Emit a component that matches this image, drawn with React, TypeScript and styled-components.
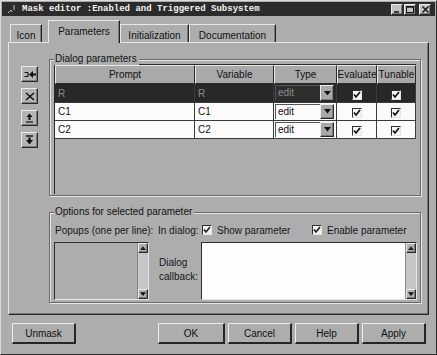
import React from "react";
import styled, { createGlobalStyle, css } from "styled-components";

const Global = createGlobalStyle`
  html, body { margin: 0; padding: 0; background: #adadad; }
  body { font-family: "Liberation Sans", Arial, sans-serif; font-size: 10px; color: #161616; }
  * { box-sizing: border-box; }
`;

const raised = css`
  border-style: solid;
  border-width: 1px;
  border-color: #ececec #2a2a2a #2a2a2a #ececec;
  box-shadow: inset -1px -1px 0 #7c7c7c;
`;

const sunken = css`
  border-style: solid;
  border-width: 1px;
  border-color: #2e2e2e #e4e4e4 #e4e4e4 #2e2e2e;
`;

const Window = styled.div`
  width: 437px;
  height: 355px;
  background: #adadad;
  border: 1px solid;
  border-color: #dcdcdc #2c2c2c #2c2c2c #dcdcdc;
  display: flex;
  flex-direction: column;
`;

const TitleBar = styled.div`
  height: 14px;
  margin: 1px 1px 0;
  background: #2c2c2c;
  display: flex;
  align-items: center;
  padding: 0 4px 0 5px;
  gap: 5px;
`;

const TitleText = styled.span`
  flex: 1;
  font-family: "Liberation Mono", monospace;
  font-weight: bold;
  font-size: 9px;
  color: #f2f2f2;
  white-space: pre;
`;

const WinButtons = styled.div`
  display: flex;
  gap: 1px;
`;

const WinBtn = styled.div<{ $gap?: boolean }>`
  width: 12px;
  height: 11px;
  background: #c2c2c2;
  ${raised};
  margin-left: ${(p) => (p.$gap ? "2px" : "0")};
  display: flex;
  align-items: center;
  justify-content: center;
`;

const TabRow = styled.div`
  height: 26px;
  display: flex;
  align-items: flex-end;
  padding-left: 9px;
`;

const Tab = styled.div<{ $w: number; $active?: boolean; $ml?: number }>`
  width: ${(p) => p.$w}px;
  height: ${(p) => (p.$active ? 23 : 18)}px;
  margin-left: ${(p) => p.$ml ?? 0}px;
  margin-bottom: ${(p) => (p.$active ? -1 : 0)}px;
  position: relative;
  z-index: ${(p) => (p.$active ? 1 : 0)};
  background: #adadad;
  border-top: 1px solid #e8e8e8;
  border-left: 1px solid #e8e8e8;
  border-right: 1px solid #222;
  box-shadow: inset -1px 0 0 #7a7a7a;
  font-size: 10px;
  text-align: center;
  padding-top: ${(p) => (p.$active ? 5 : 5)}px;
  color: #111;
`;

const Panel = styled.div`
  height: 273px;
  margin: 0 7px 0 7px;
  border-style: solid;
  border-width: 1px;
  border-color: #e6e6e6 #262626 #262626 #e6e6e6;
  box-shadow: inset -1px -1px 0 #777;
  display: flex;
`;

const SideTools = styled.div`
  width: 40px;
  padding: 23px 0 0 12px;
  display: flex;
  flex-direction: column;
  gap: 6px;
`;

const ToolBtn = styled.div`
  width: 17px;
  height: 16px;
  background: #b4b4b4;
  ${raised};
  display: flex;
  align-items: center;
  justify-content: center;
`;

const Groups = styled.div`
  width: 372px;
  display: flex;
  flex-direction: column;
`;

const Group = styled.div<{ $mt: number; $h: number }>`
  position: relative;
  margin-top: ${(p) => p.$mt}px;
  height: ${(p) => p.$h}px;
  border: 1px solid #6a6a6a;
  box-shadow: inset 1px 1px 0 #e6e6e6, 1px 1px 0 #e6e6e6;
`;

const Legend = styled.span`
  position: absolute;
  top: -7px;
  left: 4px;
  padding: 0 2px 0 1px;
  background: #adadad;
  font-size: 10px;
  line-height: 12px;
  color: #111;
`;

const TableBox = styled.div`
  margin: 4px 4px 0 4px;
  width: 362px;
  height: 130px;
  border-top: 1px solid #2a2a2a;
  border-left: 1px solid #2a2a2a;
  background: #adadad;
`;

const Row = styled.div<{ $h: number }>`
  display: grid;
  grid-template-columns: 140px 79px 63px 40px 39px;
  height: ${(p) => p.$h}px;
`;

const HeadCell = styled.div`
  background: #a9a9a9;
  border-top: 1px solid #e8e8e8;
  border-left: 1px solid #e8e8e8;
  border-right: 1px solid #2a2a2a;
  border-bottom: 1px solid #2a2a2a;
  display: flex;
  align-items: center;
  justify-content: center;
  font-size: 10px;
  white-space: nowrap;
  overflow: hidden;
  color: #111;
`;

const Cell = styled.div<{ $dark?: boolean; $center?: boolean }>`
  background: ${(p) => (p.$dark ? "#282828" : "#fbfbfb")};
  color: ${(p) => (p.$dark ? "#8a8a8a" : "#111")};
  border-right: 1px solid #3a3a3a;
  border-bottom: 1px solid #3a3a3a;
  display: flex;
  align-items: center;
  justify-content: ${(p) => (p.$center ? "center" : "flex-start")};
  padding-left: ${(p) => (p.$center ? 0 : 3)}px;
  font-size: 10px;
`;

const TypeCell = styled.div<{ $dark?: boolean }>`
  background: ${(p) => (p.$dark ? "#282828" : "#fbfbfb")};
  border-right: 1px solid #3a3a3a;
  border-bottom: 1px solid #3a3a3a;
  display: flex;
  align-items: stretch;
  padding: 1px 2px 1px 1px;
`;

const ComboText = styled.div<{ $dark?: boolean }>`
  flex: 1;
  color: ${(p) => (p.$dark ? "#8c8c8c" : "#111")};
  background: ${(p) => (p.$dark ? "#2e2e2e" : "#fbfbfb")};
  border-left: 1px solid #555;
  border-top: 1px solid #555;
  padding: 1px 0 0 2px;
  font-size: 10px;
  line-height: 12px;
`;

const ComboBtn = styled.div`
  width: 14px;
  background: #a8a8a8;
  ${raised};
  display: flex;
  align-items: center;
  justify-content: center;
`;

const Box = styled.div`
  width: 10px;
  height: 10px;
  margin-top: 3px;
  background: #f6f6f6;
  ${sunken};
  display: flex;
  align-items: center;
  justify-content: center;
`;

const OptRow = styled.div`
  display: grid;
  grid-template-columns: 103px 44px 110px 1fr;
  align-items: center;
  height: 14px;
  margin: 10px 0 0 5px;
  white-space: nowrap;
  font-size: 10px;
`;

const CheckItem = styled.div`
  display: flex;
  align-items: center;
  gap: 5px;
`;

const SmallBox = styled.div`
  width: 10px;
  height: 10px;
  background: #f4f4f4;
  ${sunken};
  display: flex;
  align-items: center;
  justify-content: center;
`;

const EditRow = styled.div`
  display: grid;
  grid-template-columns: 95px 10px 42px 216px;
  height: 58px;
  margin: 5px 0 0 4px;
`;

const ListBox = styled.div<{ $white?: boolean }>`
  ${sunken};
  background: ${(p) => (p.$white ? "#fdfdfd" : "#adadad")};
  display: flex;
  justify-content: flex-end;
`;

const ScrollBar = styled.div`
  width: 11px;
  display: flex;
  flex-direction: column;
  background: #c6c6c6;
  border-left: 1px solid #888;
`;

const ScrollArrow = styled.div`
  height: 10px;
  background: #b0b0b0;
  ${raised};
  display: flex;
  align-items: center;
  justify-content: center;
`;

const Track = styled.div`
  flex: 1;
`;

const CallbackLabel = styled.div`
  grid-column: 3;
  padding-top: 14px;
  font-size: 10px;
  line-height: 14px;
`;

const ButtonRow = styled.div`
  display: flex;
  gap: 3px;
  padding: 8px 10px 0 11px;
`;

const Button = styled.div<{ $w: number; $push?: boolean }>`
  width: ${(p) => p.$w}px;
  height: 21px;
  margin-right: ${(p) => (p.$push ? "auto" : "0")};
  background: #adadad;
  border-style: solid;
  border-width: 1px 2px 2px 1px;
  border-color: #ececec #262626 #262626 #ececec;
  display: flex;
  align-items: center;
  justify-content: center;
  font-size: 10px;
  color: #111;
`;

const CheckMark = ({ dark }: { dark?: boolean }) => (
  <svg width="8" height="8" viewBox="0 0 8 8">
    <path d="M1 3.5 L3 6 L7 1" stroke={dark ? "#111" : "#222"} strokeWidth="1.7" fill="none" />
  </svg>
);

const DownTri = ({ s = 7 }: { s?: number }) => (
  <svg width={s} height={s / 2 + 1} viewBox="0 0 8 5">
    <path d="M0 0 H8 L4 5 Z" fill="#111" />
  </svg>
);

const UpTri = () => (
  <svg width="6" height="4" viewBox="0 0 8 5">
    <path d="M0 5 H8 L4 0 Z" fill="#222" />
  </svg>
);

const ToolIcon = ({ kind }: { kind: string }) => {
  if (kind === "add")
    return (
      <svg width="12" height="9" viewBox="0 0 12 9">
        <path d="M0.5 2.5 H4 M0.5 6.5 H4 M4 2.5 V6.5" stroke="#111" strokeWidth="1.2" fill="none" />
        <path d="M5 4.5 L9 1 V3.5 H12 V5.5 H9 V8 Z" fill="#111" />
      </svg>
    );
  if (kind === "del")
    return (
      <svg width="10" height="9" viewBox="0 0 10 9">
        <path d="M1 1 L9 8 M9 1 L1 8" stroke="#111" strokeWidth="1.5" fill="none" />
      </svg>
    );
  if (kind === "up")
    return (
      <svg width="9" height="10" viewBox="0 0 9 10">
        <path d="M4.5 0.5 L7.5 4 H5.5 V7 H3.5 V4 H1.5 Z" fill="#111" />
        <path d="M1 9 H8" stroke="#111" strokeWidth="1.2" />
      </svg>
    );
  return (
    <svg width="9" height="10" viewBox="0 0 9 10">
      <path d="M1 1 H8" stroke="#111" strokeWidth="1.4" />
      <path d="M3.3 2.5 H5.7 V5 H8 L4.5 9.5 L1 5 H3.3 Z" fill="#111" />
    </svg>
  );
};

const rows = [
  { p: "R", v: "R", dark: true },
  { p: "C1", v: "C1" },
  { p: "C2", v: "C2" },
];

export default function App() {
  return (
    <>
      <Global />
      <Window>
        <TitleBar>
          <svg width="10" height="10" viewBox="0 0 10 10">
            <path d="M1 9 L4 6 M4 6 L5 8 M7 1 V6" stroke="#bbb" strokeWidth="1" fill="none" />
          </svg>
          <TitleText>Mask editor :Enabled and Triggered Subsystem</TitleText>
          <WinButtons>
            <WinBtn>
              <svg width="7" height="7" viewBox="0 0 7 7">
                <path d="M0 6 H5" stroke="#111" strokeWidth="1.5" />
              </svg>
            </WinBtn>
            <WinBtn>
              <svg width="8" height="7" viewBox="0 0 8 7">
                <rect x="0.5" y="0.5" width="7" height="6" stroke="#111" fill="none" />
                <path d="M0 1 H8" stroke="#111" strokeWidth="1.4" />
              </svg>
            </WinBtn>
            <WinBtn $gap>
              <svg width="7" height="7" viewBox="0 0 7 7">
                <path d="M0.5 0.5 L6.5 6.5 M6.5 0.5 L0.5 6.5" stroke="#111" strokeWidth="1.4" />
              </svg>
            </WinBtn>
          </WinButtons>
        </TitleBar>

        <TabRow>
          <Tab $w={32}>Icon</Tab>
          <Tab $w={72} $active $ml={6}>
            Parameters
          </Tab>
          <Tab $w={69}>Initialization</Tab>
          <Tab $w={87}>Documentation</Tab>
        </TabRow>

        <Panel>
          <SideTools>
            {["add", "del", "up", "down"].map((k) => (
              <ToolBtn key={k}>
                <ToolIcon kind={k} />
              </ToolBtn>
            ))}
          </SideTools>
          <Groups>
            <Group $mt={16} $h={137}>
              <Legend>Dialog parameters</Legend>
              <TableBox>
                <Row $h={19}>
                  <HeadCell>Prompt</HeadCell>
                  <HeadCell>Variable</HeadCell>
                  <HeadCell>Type</HeadCell>
                  <HeadCell>Evaluate</HeadCell>
                  <HeadCell>Tunable</HeadCell>
                </Row>
                {rows.map((r, i) => (
                  <Row $h={i === 0 ? 19 : 18} key={r.p}>
                    <Cell $dark={r.dark}>{r.p}</Cell>
                    <Cell $dark={r.dark}>{r.v}</Cell>
                    <TypeCell $dark={r.dark}>
                      <ComboText $dark={r.dark}>edit</ComboText>
                      <ComboBtn>
                        <DownTri s={7} />
                      </ComboBtn>
                    </TypeCell>
                    <Cell $dark={r.dark} $center>
                      <Box>
                        <CheckMark dark />
                      </Box>
                    </Cell>
                    <Cell $dark={r.dark} $center>
                      <Box>
                        <CheckMark dark />
                      </Box>
                    </Cell>
                  </Row>
                ))}
              </TableBox>
            </Group>

            <Group $mt={16} $h={91}>
              <Legend>Options for selected parameter</Legend>
              <OptRow>
                <span>Popups (one per line):</span>
                <span>In dialog:</span>
                <CheckItem>
                  <SmallBox>
                    <CheckMark />
                  </SmallBox>
                  Show parameter
                </CheckItem>
                <CheckItem>
                  <SmallBox>
                    <CheckMark />
                  </SmallBox>
                  Enable parameter
                </CheckItem>
              </OptRow>
              <EditRow>
                <ListBox>
                  <ScrollBar>
                    <ScrollArrow>
                      <UpTri />
                    </ScrollArrow>
                    <Track />
                    <ScrollArrow>
                      <DownTri s={6} />
                    </ScrollArrow>
                  </ScrollBar>
                </ListBox>
                <CallbackLabel>
                  Dialog
                  <br />
                  callback:
                </CallbackLabel>
                <ListBox $white>
                  <ScrollBar>
                    <ScrollArrow>
                      <UpTri />
                    </ScrollArrow>
                    <Track />
                    <ScrollArrow>
                      <DownTri s={6} />
                    </ScrollArrow>
                  </ScrollBar>
                </ListBox>
              </EditRow>
            </Group>
          </Groups>
        </Panel>

        <ButtonRow>
          <Button $w={64} $push>
            Unmask
          </Button>
          <Button $w={67}>OK</Button>
          <Button $w={64}>Cancel</Button>
          <Button $w={64}>Help</Button>
          <Button $w={64}>Apply</Button>
        </ButtonRow>
      </Window>
    </>
  );
}
